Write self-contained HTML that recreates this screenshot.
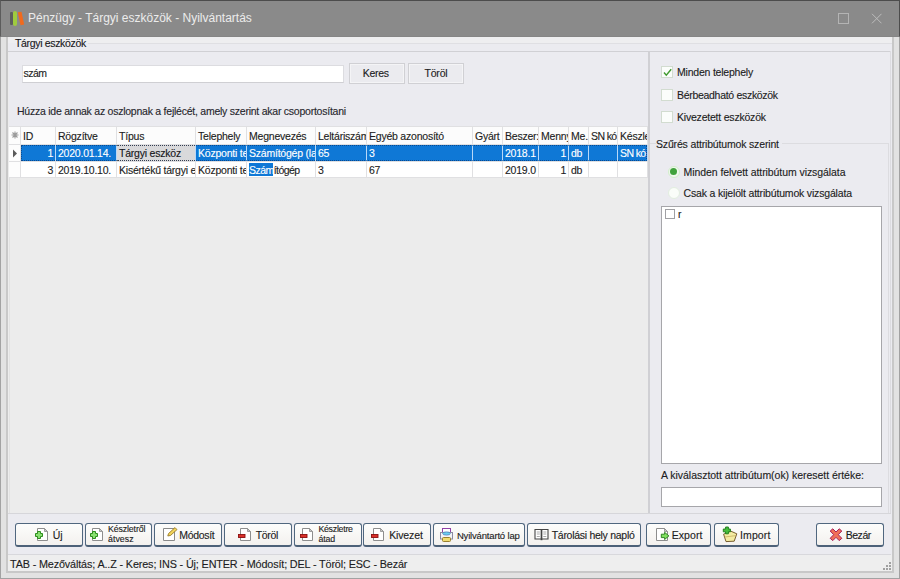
<!DOCTYPE html>
<html><head><meta charset="utf-8">
<style>
*{margin:0;padding:0;box-sizing:border-box}
html,body{width:900px;height:579px;overflow:hidden;background:#ebebf0;font-family:"Liberation Sans",sans-serif;font-size:10px;color:#1c1c22}
.a{position:absolute}
.t{position:absolute;white-space:nowrap;-webkit-text-stroke:0.12px currentColor}
.c{position:absolute;overflow:hidden;white-space:nowrap;-webkit-text-stroke:0.12px currentColor}
.btn{position:absolute;top:523px;height:24px;border:1px solid #50677f;border-bottom:2px solid #4d6178;border-radius:3px;background:linear-gradient(#fdfdfc,#f3f1ee)}
.sb{position:absolute;top:63px;height:21px;border:1px solid #d0d0d4;background:#ebebef;box-shadow:inset 0 0 0 1px #f4f4f6}
.cb{position:absolute;width:12px;height:12px;border:1px solid #d2dcd0;background:#fbfdfb}
</style></head><body>
<div class="a" style="left:0px;top:0px;width:900px;height:579px;background:#e2e2e2;border:1px solid #a2a2a2"></div>
<div class="a" style="left:6px;top:37px;width:888px;height:536px;background:#ebebf0;border:2px solid #c8c8c8;border-top:0"></div>
<div class="a" style="left:8px;top:37px;width:884px;height:534px;background:#ebebf0;"></div>
<div class="a" style="left:8px;top:37px;width:884px;height:6px;background:#eeeef0;"></div>
<div class="a" style="left:8px;top:555px;width:884px;height:16px;background:#eeeeee;"></div>
<div class="a" style="left:8px;top:52px;width:1px;height:461px;background:#ececec;"></div>
<div class="a" style="left:9px;top:178px;width:639px;height:335px;background:#ececec;border-left:1px solid #e2e2e2"></div>
<div class="a" style="left:0px;top:0px;width:900px;height:37px;background:#8a8a8a;border-top:1px solid #4c4c4c;border-left:1px solid #5c5c5c;border-right:1px solid #4c4c4c;border-bottom:1px solid #858585"></div>
<div class="a" style="left:10px;top:12px;width:3px;height:13px;background:#5e5e5e;border-radius:1px"></div>
<div class="a" style="left:13px;top:11px;width:4px;height:15px;background:#9fcb3e;border-radius:2px"></div>
<svg class="a" style="left:17px;top:11px" width="8" height="15"><path d="M0.8 1.2 L4.5 0.8 L7.2 13.6 L3.5 14.3 Z" fill="#f06a1e"/></svg>
<div class="t" style="left:28px;top:11px;font-size:12px;line-height:14px;color:#ececec;-webkit-text-stroke:0">Pénzügy - Tárgyi eszközök - Nyilvántartás</div>
<div class="a" style="left:838px;top:13px;width:11px;height:11px;background:transparent;border:1px solid #b4b4b4"></div>
<svg class="a" style="left:871px;top:13px" width="11" height="11"><path d="M1 0.8 L10.5 10.3 M10.5 0.8 L1 10.3" stroke="#bcbcbc" stroke-width="1"/></svg>
<div class="a" style="left:88px;top:43px;width:804px;height:1px;background:#dfdfe3;"></div>
<div class="a" style="left:8px;top:51px;width:883px;height:1px;background:#d0d0d4;"></div>
<div class="a" style="left:890px;top:51px;width:1px;height:463px;background:#dcdce0;"></div>
<div class="t" style="left:15px;top:37px;font-size:10.5px;line-height:13px;color:#18181c;letter-spacing:-0.337px">Tárgyi eszközök</div>
<div class="a" style="left:22px;top:65px;width:322px;height:18px;background:#fff;border:1px solid #dcdce0;border-bottom-color:#cfcfd3"></div>
<div class="t" style="left:23.5px;top:67px;font-size:10.5px;line-height:13px;letter-spacing:-0.496px">szám</div>
<div class="sb" style="left:349px;width:56px"></div>
<div class="t" style="left:362.8px;top:67px;font-size:10.5px;line-height:13px;letter-spacing:-0.286px">Keres</div>
<div class="sb" style="left:408px;width:56px"></div>
<div class="t" style="left:424.5px;top:67px;font-size:10.5px;line-height:13px;letter-spacing:-0.204px">Töröl</div>
<div class="t" style="left:17px;top:105px;font-size:10.5px;line-height:13px;color:#26262c;letter-spacing:-0.241px">Húzza ide annak az oszlopnak a fejlécét, amely szerint akar csoportosítani</div>
<div class="a" style="left:9px;top:126px;width:639px;height:52px;background:#e0e0e2;"></div>
<div class="a" style="left:9px;top:127px;width:11px;height:17px;background:#fdfdfd;"></div>
<svg class="a" style="left:11px;top:131px" width="8" height="8"><g stroke="#9c9c9c" stroke-width="1.1"><path d="M4 0.5V7.5M0.5 4H7.5M1.5 1.5L6.5 6.5M6.5 1.5L1.5 6.5"/></g></svg>
<div class="c" style="left:21px;top:127px;width:34px;height:17px;background:#fcfcfc;"><div style="position:absolute;left:2px;top:3px;line-height:12px;font-size:10.5px;letter-spacing:-0.22px;color:#1c1c22;white-space:nowrap">ID</div></div>
<div class="c" style="left:56px;top:127px;width:60px;height:17px;background:#fcfcfc;"><div style="position:absolute;left:2px;top:3px;line-height:12px;font-size:10.5px;letter-spacing:-0.22px;color:#1c1c22;white-space:nowrap">Rögzítve</div></div>
<div class="c" style="left:117px;top:127px;width:78px;height:17px;background:#fcfcfc;"><div style="position:absolute;left:2px;top:3px;line-height:12px;font-size:10.5px;letter-spacing:-0.22px;color:#1c1c22;white-space:nowrap">Típus</div></div>
<div class="c" style="left:196px;top:127px;width:50px;height:17px;background:#fcfcfc;"><div style="position:absolute;left:2px;top:3px;line-height:12px;font-size:10.5px;letter-spacing:-0.22px;color:#1c1c22;white-space:nowrap">Telephely</div></div>
<div class="c" style="left:247px;top:127px;width:68px;height:17px;background:#fcfcfc;"><div style="position:absolute;left:2px;top:3px;line-height:12px;font-size:10.5px;letter-spacing:-0.22px;color:#1c1c22;white-space:nowrap">Megnevezés</div></div>
<div class="c" style="left:316px;top:127px;width:50px;height:17px;background:#fcfcfc;"><div style="position:absolute;left:2px;top:3px;line-height:12px;font-size:10.5px;letter-spacing:-0.22px;color:#1c1c22;white-space:nowrap">Leltáriszám</div></div>
<div class="c" style="left:367px;top:127px;width:105px;height:17px;background:#fcfcfc;"><div style="position:absolute;left:2px;top:3px;line-height:12px;font-size:10.5px;letter-spacing:-0.22px;color:#1c1c22;white-space:nowrap">Egyéb azonosító</div></div>
<div class="c" style="left:473px;top:127px;width:29px;height:17px;background:#fcfcfc;"><div style="position:absolute;left:2px;top:3px;line-height:12px;font-size:10.5px;letter-spacing:-0.22px;color:#1c1c22;white-space:nowrap">Gyárt</div></div>
<div class="c" style="left:503px;top:127px;width:35px;height:17px;background:#fcfcfc;"><div style="position:absolute;left:2px;top:3px;line-height:12px;font-size:10.5px;letter-spacing:-0.22px;color:#1c1c22;white-space:nowrap">Beszer:</div></div>
<div class="c" style="left:539px;top:127px;width:29px;height:17px;background:#fcfcfc;"><div style="position:absolute;left:2px;top:3px;line-height:12px;font-size:10.5px;letter-spacing:-0.22px;color:#1c1c22;white-space:nowrap">Mennyiség</div></div>
<div class="c" style="left:569px;top:127px;width:19px;height:17px;background:#fcfcfc;"><div style="position:absolute;left:2px;top:3px;line-height:12px;font-size:10.5px;letter-spacing:-0.22px;color:#1c1c22;white-space:nowrap">Me.</div></div>
<div class="c" style="left:589px;top:127px;width:28px;height:17px;background:#fcfcfc;"><div style="position:absolute;left:2px;top:3px;line-height:12px;font-size:10.5px;letter-spacing:-0.22px;color:#1c1c22;white-space:nowrap"><span style="letter-spacing:-0.6px">SN kó</span></div></div>
<div class="c" style="left:618px;top:127px;width:29px;height:17px;background:#fcfcfc;"><div style="position:absolute;left:2px;top:3px;line-height:12px;font-size:10.5px;letter-spacing:-0.22px;color:#1c1c22;white-space:nowrap">Készletről</div></div>
<div class="a" style="left:21px;top:145px;width:627px;height:16px;background:#b8d8f8;"></div>
<div class="a" style="left:9px;top:145px;width:11px;height:16px;background:#fdfdfd;"></div>
<div class="c" style="left:21px;top:145px;width:34px;height:16px;background:#0f78d6;"><div style="position:absolute;right:2px;top:2px;line-height:12px;font-size:10.5px;letter-spacing:-0.22px;color:#ffffff;white-space:nowrap">1</div></div>
<div class="c" style="left:56px;top:145px;width:60px;height:16px;background:#0f78d6;"><div style="position:absolute;left:2px;top:2px;line-height:12px;font-size:10.5px;letter-spacing:-0.22px;color:#ffffff;white-space:nowrap">2020.01.14.</div></div>
<div class="c" style="left:117px;top:145px;width:78px;height:16px;background:#d9d9db;border-top:1px dotted #606060;border-bottom:1px dotted #606060"><div style="position:absolute;left:2px;top:1px;line-height:12px;font-size:10.5px;letter-spacing:-0.22px;color:#141418;white-space:nowrap">Tárgyi eszköz</div></div>
<div class="c" style="left:196px;top:145px;width:50px;height:16px;background:#0f78d6;"><div style="position:absolute;left:2px;top:2px;line-height:12px;font-size:10.5px;letter-spacing:-0.22px;color:#ffffff;white-space:nowrap">Központi telephely</div></div>
<div class="c" style="left:247px;top:145px;width:68px;height:16px;background:#0f78d6;"><div style="position:absolute;left:2px;top:2px;line-height:12px;font-size:10.5px;letter-spacing:-0.22px;color:#ffffff;white-space:nowrap">Számítógép (laptop)</div></div>
<div class="c" style="left:316px;top:145px;width:50px;height:16px;background:#0f78d6;"><div style="position:absolute;left:2px;top:2px;line-height:12px;font-size:10.5px;letter-spacing:-0.22px;color:#ffffff;white-space:nowrap">65</div></div>
<div class="c" style="left:367px;top:145px;width:105px;height:16px;background:#0f78d6;"><div style="position:absolute;left:2px;top:2px;line-height:12px;font-size:10.5px;letter-spacing:-0.22px;color:#ffffff;white-space:nowrap">3</div></div>
<div class="c" style="left:473px;top:145px;width:29px;height:16px;background:#0f78d6;"><div style="position:absolute;left:2px;top:2px;line-height:12px;font-size:10.5px;letter-spacing:-0.22px;color:#ffffff;white-space:nowrap"></div></div>
<div class="c" style="left:503px;top:145px;width:35px;height:16px;background:#0f78d6;"><div style="position:absolute;left:2px;top:2px;line-height:12px;font-size:10.5px;letter-spacing:-0.22px;color:#ffffff;white-space:nowrap">2018.1</div></div>
<div class="c" style="left:539px;top:145px;width:29px;height:16px;background:#0f78d6;"><div style="position:absolute;right:2px;top:2px;line-height:12px;font-size:10.5px;letter-spacing:-0.22px;color:#ffffff;white-space:nowrap">1</div></div>
<div class="c" style="left:569px;top:145px;width:19px;height:16px;background:#0f78d6;"><div style="position:absolute;left:2px;top:2px;line-height:12px;font-size:10.5px;letter-spacing:-0.22px;color:#ffffff;white-space:nowrap">db</div></div>
<div class="c" style="left:589px;top:145px;width:28px;height:16px;background:#0f78d6;"><div style="position:absolute;left:2px;top:2px;line-height:12px;font-size:10.5px;letter-spacing:-0.22px;color:#ffffff;white-space:nowrap"></div></div>
<div class="c" style="left:618px;top:145px;width:29px;height:16px;background:#0f78d6;"><div style="position:absolute;left:2px;top:2px;line-height:12px;font-size:10.5px;letter-spacing:-0.22px;color:#ffffff;white-space:nowrap"><span style="letter-spacing:-0.6px">SN kó</span></div></div>
<div class="a" style="left:9px;top:162px;width:11px;height:15px;background:#fdfdfd;"></div>
<div class="c" style="left:21px;top:162px;width:34px;height:15px;background:#ffffff;"><div style="position:absolute;right:2px;top:2px;line-height:12px;font-size:10.5px;letter-spacing:-0.22px;color:#1c1c22;white-space:nowrap">3</div></div>
<div class="c" style="left:56px;top:162px;width:60px;height:15px;background:#ffffff;"><div style="position:absolute;left:2px;top:2px;line-height:12px;font-size:10.5px;letter-spacing:-0.22px;color:#1c1c22;white-space:nowrap">2019.10.10.</div></div>
<div class="c" style="left:117px;top:162px;width:78px;height:15px;background:#ffffff;"><div style="position:absolute;left:2px;top:2px;line-height:12px;font-size:10.5px;letter-spacing:-0.22px;color:#1c1c22;white-space:nowrap">Kisértékű tárgyi eszköz</div></div>
<div class="c" style="left:196px;top:162px;width:50px;height:15px;background:#ffffff;"><div style="position:absolute;left:2px;top:2px;line-height:12px;font-size:10.5px;letter-spacing:-0.22px;color:#1c1c22;white-space:nowrap">Központi telephely</div></div>
<div class="c" style="left:247px;top:162px;width:68px;height:15px;background:linear-gradient(#0f78d6,#0f78d6) no-repeat 2px 1px / 24px 13px, #fff;"><div style="position:absolute;left:2px;top:2px;line-height:12px;font-size:10.5px;letter-spacing:-0.22px;color:#1c1c22;white-space:nowrap"><span style="letter-spacing:-0.55px"><span style="color:#fff">Szám</span>ítógép</span></div></div>
<div class="c" style="left:316px;top:162px;width:50px;height:15px;background:#ffffff;"><div style="position:absolute;left:2px;top:2px;line-height:12px;font-size:10.5px;letter-spacing:-0.22px;color:#1c1c22;white-space:nowrap">3</div></div>
<div class="c" style="left:367px;top:162px;width:105px;height:15px;background:#ffffff;"><div style="position:absolute;left:2px;top:2px;line-height:12px;font-size:10.5px;letter-spacing:-0.22px;color:#1c1c22;white-space:nowrap">67</div></div>
<div class="c" style="left:473px;top:162px;width:29px;height:15px;background:#ffffff;"><div style="position:absolute;left:2px;top:2px;line-height:12px;font-size:10.5px;letter-spacing:-0.22px;color:#1c1c22;white-space:nowrap"></div></div>
<div class="c" style="left:503px;top:162px;width:35px;height:15px;background:#ffffff;"><div style="position:absolute;left:2px;top:2px;line-height:12px;font-size:10.5px;letter-spacing:-0.22px;color:#1c1c22;white-space:nowrap">2019.0</div></div>
<div class="c" style="left:539px;top:162px;width:29px;height:15px;background:#ffffff;"><div style="position:absolute;right:2px;top:2px;line-height:12px;font-size:10.5px;letter-spacing:-0.22px;color:#1c1c22;white-space:nowrap">1</div></div>
<div class="c" style="left:569px;top:162px;width:19px;height:15px;background:#ffffff;"><div style="position:absolute;left:2px;top:2px;line-height:12px;font-size:10.5px;letter-spacing:-0.22px;color:#1c1c22;white-space:nowrap">db</div></div>
<div class="c" style="left:589px;top:162px;width:28px;height:15px;background:#ffffff;"><div style="position:absolute;left:2px;top:2px;line-height:12px;font-size:10.5px;letter-spacing:-0.22px;color:#1c1c22;white-space:nowrap"></div></div>
<div class="c" style="left:618px;top:162px;width:29px;height:15px;background:#ffffff;"><div style="position:absolute;left:2px;top:2px;line-height:12px;font-size:10.5px;letter-spacing:-0.22px;color:#1c1c22;white-space:nowrap"></div></div>
<div class="a" style="left:21px;top:145px;width:626px;height:16px;background:transparent;border:1px dotted rgba(10,30,70,0.5)"></div>
<svg class="a" style="left:12px;top:149px" width="6" height="9"><path d="M1 0.5L5 4.5L1 8.5Z" fill="#5a5a5a"/></svg>
<div class="a" style="left:648px;top:52px;width:2px;height:461px;background:#d0d0d4;"></div>
<div class="a" style="left:8px;top:513px;width:883px;height:1px;background:#d6d6da;"></div>
<div class="cb" style="left:661px;top:66px"></div>
<div class="t" style="left:677px;top:66px;font-size:10.5px;line-height:13px;letter-spacing:-0.211px">Minden telephely</div>
<div class="cb" style="left:661px;top:89px"></div>
<div class="t" style="left:677px;top:89px;font-size:10.5px;line-height:13px;letter-spacing:-0.301px">Bérbeadható eszközök</div>
<div class="cb" style="left:661px;top:111px"></div>
<div class="t" style="left:677px;top:111px;font-size:10.5px;line-height:13px;letter-spacing:-0.210px">Kivezetett eszközök</div>
<svg class="a" style="left:662px;top:67px" width="11" height="11"><path d="M2 5.5L4.3 8.2L9.2 2.2" fill="none" stroke="#3f9a2e" stroke-width="1.4"/></svg>
<div class="a" style="left:650px;top:143px;width:238px;height:1px;background:#dcdce0;"></div>
<div class="a" style="left:888px;top:143px;width:1px;height:370px;background:#dcdce0;"></div>
<div class="t" style="left:656px;top:138px;font-size:10.5px;line-height:13px;letter-spacing:-0.163px;padding-right:3px;background:#ebebf0">Szűrés attribútumok szerint</div>
<div class="a" style="left:667.5px;top:165.5px;width:12px;height:12px;background:#f0f8ee;border-radius:50%;border:1.5px solid #d2eecb"></div>
<div class="a" style="left:670px;top:168px;width:7px;height:7px;background:#40a23c;border-radius:50%"></div>
<div class="t" style="left:683.6px;top:166px;font-size:10.5px;line-height:13px;letter-spacing:-0.077px">Minden felvett attribútum vizsgálata</div>
<div class="a" style="left:667.5px;top:187px;width:12px;height:12px;background:#fafdf9;border-radius:50%;border:1px solid #e2eee0"></div>
<div class="t" style="left:683.6px;top:187px;font-size:10.5px;line-height:13px;letter-spacing:-0.176px">Csak a kijelölt attribútumok vizsgálata</div>
<div class="a" style="left:661px;top:206px;width:221px;height:258px;background:#fff;border:1px solid #a6a6aa"></div>
<div class="a" style="left:665px;top:209px;width:10px;height:10px;background:#fff;border:1px solid #a0a0a4"></div>
<div class="t" style="left:678px;top:209px;font-size:10.3px;line-height:12px">r</div>
<div class="t" style="left:661px;top:469px;font-size:10.5px;line-height:13px;letter-spacing:-0.031px">A kiválasztott attribútum(ok) keresett értéke:</div>
<div class="a" style="left:661px;top:487px;width:221px;height:20px;background:#fff;border:1px solid #a6a6aa"></div>
<div class="btn" style="left:15px;width:68px"></div>
<div class="a" style="left:34px;top:526px"><svg width="16" height="16"><path d="M3.5 2.5H10.5L13.5 5.5V14.5H3.5Z" fill="#fff" stroke="#8e8e8e"/><path d="M10.5 2.5V5.5H13.5Z" fill="#c8c8c8" stroke="#8e8e8e" stroke-width="0.8"/><path d="M3.5 5.5H6.5V7.5H8.5V10.5H6.5V12.5H3.5V10.5H1.5V7.5H3.5Z" fill="#88e070" stroke="#2c8c1c"/></svg></div>
<div class="t" style="left:52.8px;top:529px;font-size:10.5px;line-height:13px;letter-spacing:-0.108px">Új</div>
<div class="btn" style="left:85px;width:67px"></div>
<div class="a" style="left:88.7px;top:526px"><svg width="16" height="16"><path d="M3.5 2.5H10.5L13.5 5.5V14.5H3.5Z" fill="#fff" stroke="#8e8e8e"/><path d="M10.5 2.5V5.5H13.5Z" fill="#c8c8c8" stroke="#8e8e8e" stroke-width="0.8"/><path d="M3.5 5.5H6.5V7.5H8.5V10.5H6.5V12.5H3.5V10.5H1.5V7.5H3.5Z" fill="#88e070" stroke="#2c8c1c"/></svg></div>
<div class="t" style="left:108px;top:524px;font-size:8.8px;line-height:10px;letter-spacing:-0.134px">Készletről</div>
<div class="t" style="left:108px;top:534px;font-size:8.8px;line-height:10px;letter-spacing:0.045px">átvesz</div>
<div class="btn" style="left:154px;width:68px"></div>
<div class="a" style="left:161px;top:526px"><svg width="17" height="16"><path d="M2.5 2.5H13.5V14.5H2.5Z" fill="#fff" stroke="#8a8a8a"/><path d="M6.8 10L7.5 7.6L14 1.6L16 3.6L9.6 9.4Z" fill="#f2d45a" stroke="#9a7a28" stroke-width="0.9"/></svg></div>
<div class="t" style="left:179.3px;top:529px;font-size:10.5px;line-height:13px;letter-spacing:-0.321px">Módosít</div>
<div class="btn" style="left:224px;width:68px"></div>
<div class="a" style="left:236px;top:526px"><svg width="16" height="16"><path d="M4.5 2.5H11.5L14.5 5.5V14.5H4.5Z" fill="#fff" stroke="#8e8e8e"/><path d="M11.5 2.5V5.5H14.5Z" fill="#c8c8c8" stroke="#8e8e8e" stroke-width="0.8"/><rect x="2.5" y="8.5" width="6.5" height="3" fill="#d8302a" stroke="#8c1010" stroke-width="0.9"/></svg></div>
<div class="t" style="left:255.7px;top:529px;font-size:10.5px;line-height:13px;letter-spacing:-0.344px">Töröl</div>
<div class="btn" style="left:294px;width:68px"></div>
<div class="a" style="left:297.5px;top:526px"><svg width="16" height="16"><path d="M4.5 2.5H11.5L14.5 5.5V14.5H4.5Z" fill="#fff" stroke="#8e8e8e"/><path d="M11.5 2.5V5.5H14.5Z" fill="#c8c8c8" stroke="#8e8e8e" stroke-width="0.8"/><rect x="2.5" y="8.5" width="6.5" height="3" fill="#d8302a" stroke="#8c1010" stroke-width="0.9"/></svg></div>
<div class="t" style="left:318.4px;top:524px;font-size:8.8px;line-height:10px;letter-spacing:-0.265px">Készletre</div>
<div class="t" style="left:318.4px;top:534px;font-size:8.8px;line-height:10px;letter-spacing:-0.106px">átad</div>
<div class="btn" style="left:363px;width:68px"></div>
<div class="a" style="left:369px;top:526px"><svg width="16" height="16"><path d="M4.5 2.5H11.5L14.5 5.5V14.5H4.5Z" fill="#fff" stroke="#8e8e8e"/><path d="M11.5 2.5V5.5H14.5Z" fill="#c8c8c8" stroke="#8e8e8e" stroke-width="0.8"/><rect x="2.5" y="8.5" width="6.5" height="3" fill="#d8302a" stroke="#8c1010" stroke-width="0.9"/></svg></div>
<div class="t" style="left:389.2px;top:529px;font-size:10.5px;line-height:13px;letter-spacing:-0.133px">Kivezet</div>
<div class="btn" style="left:433px;width:92px"></div>
<div class="a" style="left:438px;top:526px"><svg width="17" height="17"><rect x="4.5" y="2.5" width="8" height="5" fill="#fff" stroke="#9040a8"/><rect x="2.5" y="6.5" width="12" height="6.5" fill="#f4f4f8" stroke="#8a8aa0"/><ellipse cx="8.5" cy="7.5" rx="3.8" ry="1.6" fill="#6ad0f0" stroke="#5080c0" stroke-width="0.8"/><rect x="4.5" y="11.5" width="8" height="4" rx="1" fill="#f0dc70" stroke="#9a8030"/></svg></div>
<div class="t" style="left:456.9px;top:530px;font-size:9.5px;line-height:11px;letter-spacing:-0.173px">Nyilvántartó lap</div>
<div class="btn" style="left:527px;width:114px"></div>
<div class="a" style="left:533px;top:526px"><svg width="17" height="16"><path d="M2 3.5H8.2V13H2Z M8.8 3.5H15V13H8.8Z" fill="#fff" stroke="#454545" stroke-width="1.1"/><path d="M3.8 6H6.8M3.8 8H6.8M3.8 10.5H6.8M10.3 6H13.3M10.3 8H13.3M10.3 10.5H13.3" stroke="#a0a0a0" stroke-width="0.9"/><path d="M7.6 13H9.4V14.2H7.6Z" fill="#454545"/></svg></div>
<div class="t" style="left:551.7px;top:529px;font-size:10.5px;line-height:13px;letter-spacing:-0.280px">Tárolási hely napló</div>
<div class="btn" style="left:646px;width:65px"></div>
<div class="a" style="left:654px;top:526px"><svg width="16" height="16"><path d="M2.5 2.5H10.5L13.5 5.5V14.5H2.5Z" fill="#fff" stroke="#8e8e8e"/><path d="M10.5 2.5V5.5H13.5Z" fill="#c8c8c8" stroke="#8e8e8e" stroke-width="0.8"/><path d="M7.3 8.2H10.6V6.3L14.9 9.9L10.6 13.5V11.6H7.3Z" fill="#80e060" stroke="#237a18" stroke-width="0.9"/></svg></div>
<div class="t" style="left:671.7px;top:529px;font-size:10.5px;line-height:13px;letter-spacing:0.076px">Export</div>
<div class="btn" style="left:714px;width:65px"></div>
<div class="a" style="left:721px;top:526px"><svg width="17" height="17"><path d="M2.6 8.2L9.5 5L15.8 7.8L13.2 15.2L5 15.6Z" fill="#f3eba2" stroke="#6a4e1e" stroke-width="0.9"/><path d="M3.8 11L14.8 9.6" stroke="#c8b060" stroke-width="0.8"/><path d="M4.6 1H7.4V3H9.4V5.8H7.4V7.8H4.6V5.8H2.3V3H4.6Z" fill="#48be3c" stroke="#1c7a18" stroke-width="0.9"/></svg></div>
<div class="t" style="left:740px;top:529px;font-size:10.5px;line-height:13px;letter-spacing:0.108px">Import</div>
<div class="btn" style="left:816px;width:68px"></div>
<div class="a" style="left:828px;top:526px"><svg width="16" height="16"><path d="M2.2 5L4.8 2.8L8 6L11.2 2.8L13.8 5L10.3 8.7L13.8 12.3L11.2 14.6L8 11.3L4.8 14.6L2.2 12.3L5.7 8.7Z" fill="#f07058" stroke="#a8205a" stroke-width="1"/></svg></div>
<div class="t" style="left:845.7px;top:529px;font-size:10.5px;line-height:13px;letter-spacing:-0.466px">Bezár</div>
<div class="a" style="left:8px;top:554px;width:883px;height:1px;background:#d8d8dc;"></div>
<div class="t" style="left:10px;top:558px;font-size:10.8px;line-height:13px;letter-spacing:-0.134px">TAB - Mezőváltás; A..Z - Keres; INS - Új; ENTER - Módosít; DEL - Töröl; ESC - Bezár</div>
<svg class="a" style="left:880px;top:560px" width="12" height="12"><g fill="#a0a0a0"><rect x="9" y="2" width="2" height="2"/><rect x="6" y="5" width="2" height="2"/><rect x="9" y="5" width="2" height="2"/><rect x="3" y="8" width="2" height="2"/><rect x="6" y="8" width="2" height="2"/><rect x="9" y="8" width="2" height="2"/></g></svg>
</body></html>
